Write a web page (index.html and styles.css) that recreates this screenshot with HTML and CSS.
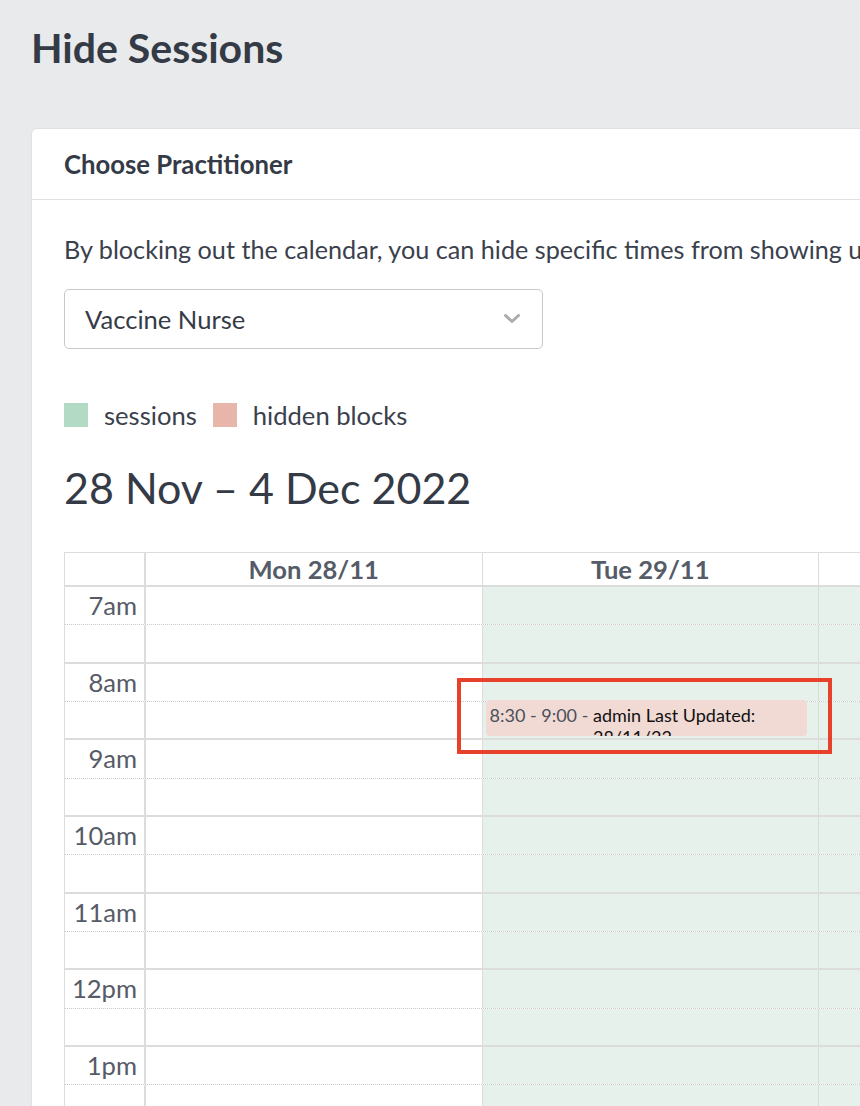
FILE: index.html
```html
<!DOCTYPE html>
<html lang="en">
<head>
<meta charset="utf-8">
<title>Hide Sessions</title>
<link rel="stylesheet" href="styles.css">
</head>
<body>
<div class="page">
  <h1 class="page-title">Hide Sessions</h1>
  <div class="card">
    <div class="card-header">Choose Practitioner</div>
    <div class="card-body">
      <p class="intro">By blocking out the calendar, you can hide specific times from showing up as available for online booking.</p>
      <div class="select">
        <span class="select-value">Vaccine Nurse</span>
        <svg class="chevron" width="16" height="10" viewBox="0 0 16 10"><polyline points="1.5,1.5 8,7.5 14.5,1.5" fill="none" stroke="#a9abae" stroke-width="3" stroke-linecap="round" stroke-linejoin="round"/></svg>
      </div>
      <div class="legend">
        <span class="swatch swatch-session"></span><span class="legend-label">sessions</span>
        <span class="swatch swatch-hidden"></span><span class="legend-label">hidden blocks</span>
      </div>
      <h2 class="range">28 Nov – 4 Dec 2022</h2>
      <div class="calendar">
        <div class="cal-head">
          <div class="axis"></div>
          <div class="day-head">Mon 28/11</div>
          <div class="day-head">Tue 29/11</div>
          <div class="day-head">Wed 30/11</div>
          <div class="day-head">Thu 1/12</div>
          <div class="day-head">Fri 2/12</div>
          <div class="day-head">Sat 3/12</div>
          <div class="day-head">Sun 4/12</div>
        </div>
        <div class="slot half"><div class="axis">7am</div><div class="day"></div><div class="day on"></div><div class="day on"></div><div class="day"></div><div class="day"></div><div class="day"></div><div class="day"></div></div>
        <div class="slot hour"><div class="axis"></div><div class="day"></div><div class="day on"></div><div class="day on"></div><div class="day"></div><div class="day"></div><div class="day"></div><div class="day"></div></div>
        <div class="slot half"><div class="axis">8am</div><div class="day"></div><div class="day on"></div><div class="day on"></div><div class="day"></div><div class="day"></div><div class="day"></div><div class="day"></div></div>
        <div class="slot hour"><div class="axis"></div><div class="day"></div><div class="day on"><div class="event"><span class="event-time">8:30 - 9:00 - </span><span class="event-title">admin Last Updated: 28/11/22</span></div></div><div class="day on"></div><div class="day"></div><div class="day"></div><div class="day"></div><div class="day"></div></div>
        <div class="slot half"><div class="axis">9am</div><div class="day"></div><div class="day on"></div><div class="day on"></div><div class="day"></div><div class="day"></div><div class="day"></div><div class="day"></div></div>
        <div class="slot hour"><div class="axis"></div><div class="day"></div><div class="day on"></div><div class="day on"></div><div class="day"></div><div class="day"></div><div class="day"></div><div class="day"></div></div>
        <div class="slot half"><div class="axis">10am</div><div class="day"></div><div class="day on"></div><div class="day on"></div><div class="day"></div><div class="day"></div><div class="day"></div><div class="day"></div></div>
        <div class="slot hour"><div class="axis"></div><div class="day"></div><div class="day on"></div><div class="day on"></div><div class="day"></div><div class="day"></div><div class="day"></div><div class="day"></div></div>
        <div class="slot half"><div class="axis">11am</div><div class="day"></div><div class="day on"></div><div class="day on"></div><div class="day"></div><div class="day"></div><div class="day"></div><div class="day"></div></div>
        <div class="slot hour"><div class="axis"></div><div class="day"></div><div class="day on"></div><div class="day on"></div><div class="day"></div><div class="day"></div><div class="day"></div><div class="day"></div></div>
        <div class="slot half"><div class="axis">12pm</div><div class="day"></div><div class="day on"></div><div class="day on"></div><div class="day"></div><div class="day"></div><div class="day"></div><div class="day"></div></div>
        <div class="slot hour"><div class="axis"></div><div class="day"></div><div class="day on"></div><div class="day on"></div><div class="day"></div><div class="day"></div><div class="day"></div><div class="day"></div></div>
        <div class="slot half"><div class="axis">1pm</div><div class="day"></div><div class="day on"></div><div class="day on"></div><div class="day"></div><div class="day"></div><div class="day"></div><div class="day"></div></div>
        <div class="slot hour"><div class="axis"></div><div class="day"></div><div class="day on"></div><div class="day on"></div><div class="day"></div><div class="day"></div><div class="day"></div><div class="day"></div></div>
        <div class="slot half"><div class="axis">2pm</div><div class="day"></div><div class="day on"></div><div class="day on"></div><div class="day"></div><div class="day"></div><div class="day"></div><div class="day"></div></div>
        <div class="highlight"></div>
      </div>
    </div>
  </div>
</div>
</body>
</html>
```

FILE: styles.css
```css
html, body {
  margin: 0;
  overflow: hidden;
}
body {
  background: #e9eaec;
  font-family: Lato, "Open Sans", sans-serif;
  color: #363b47;
}
.page {
  padding: 24px 0 0 31px;
}
.page-title {
  margin: 0;
  font-size: 41px;
  line-height: 48px;
  font-weight: 700;
  color: #343a46;
}
.card {
  margin-top: 56px;
  width: max-content;
  background: #fff;
  border: 1px solid #dfe1e4;
  border-radius: 6px;
}
.card-header {
  box-sizing: border-box;
  height: 71px;
  display: flex;
  align-items: center;
  padding: 0 0 0 32px;
  border-bottom: 1px solid #dfe1e4;
  font-size: 25.7px;
  font-weight: 700;
  color: #343a46;
}
.card-body {
  padding: 33px 32px 40px;
}
.intro {
  margin: 0;
  font-size: 25.2px;
  line-height: 32px;
  color: #3a404c;
}
.select {
  margin-top: 24px;
  box-sizing: border-box;
  width: 479px;
  height: 60px;
  border: 1px solid #c6c8cb;
  border-radius: 5px;
  display: flex;
  align-items: center;
  justify-content: space-between;
  padding: 0 22px 0 20px;
  font-size: 25.6px;
  color: #363b47;
}
.chevron {
  display: block;
}
.legend {
  margin-top: 54px;
  display: flex;
  align-items: center;
  height: 24px;
  font-size: 25.6px;
  color: #3a404c;
}
.swatch {
  width: 24px;
  height: 24px;
  flex: none;
}
.swatch-session { background: #b2dac5; }
.swatch-hidden { background: #e7b5a9; margin-left: 16px; }
.legend-label { margin-left: 16px; }
.range {
  margin: 35px 0 0;
  font-size: 43px;
  line-height: 52px;
  font-weight: 400;
  color: #343a46;
}
.calendar {
  position: relative;
  margin-top: 38px;
  border-left: 1px solid #dcdcdc;
}
.cal-head,
.slot {
  display: grid;
  grid-template-columns: 81px repeat(7, 336.5px);
}
.cal-head {
  height: 32px;
  border-top: 1px solid #dcdcdc;
  border-bottom: 2px solid #dcdcdc;
}
.cal-head .axis,
.slot .axis {
  border-right: 2px solid #dcdcdc;
}
.day-head {
  border-right: 1px solid #dcdcdc;
  font-size: 25.6px;
  font-weight: 700;
  line-height: 32px;
  text-align: center;
  color: #555b67;
}
.slot {
  box-sizing: border-box;
  height: 38.333px;
}
.slot.half { border-bottom: 1px dotted #c9c9c9; }
.slot.hour { border-bottom: 2px solid #dcdcdc; }
.slot .axis {
  box-sizing: border-box;
  padding: 4px 7px 0 0;
  text-align: right;
  font-size: 25.6px;
  line-height: 28px;
  color: #555b67;
}
.day {
  position: relative;
  border-right: 1px solid #dcdcdc;
}
.day.on {
  background: #e7f1eb;
  border-right-color: #d6ddd8;
}
.event {
  position: absolute;
  left: 3px;
  right: 11px;
  top: -2px;
  height: 36px;
  box-sizing: border-box;
  padding: 4px 4px 0;
  display: flex;
  background: #f2dad4;
  border-radius: 4px;
  overflow: hidden;
  font-size: 18px;
  line-height: 22px;
}
.event-time {
  flex: none;
  white-space: pre;
  color: #4a505c;
}
.event-title {
  color: #111;
}
.highlight {
  position: absolute;
  left: 392px;
  top: 126px;
  width: 375px;
  height: 76px;
  box-sizing: border-box;
  border: 4px solid #e8412b;
}
```
